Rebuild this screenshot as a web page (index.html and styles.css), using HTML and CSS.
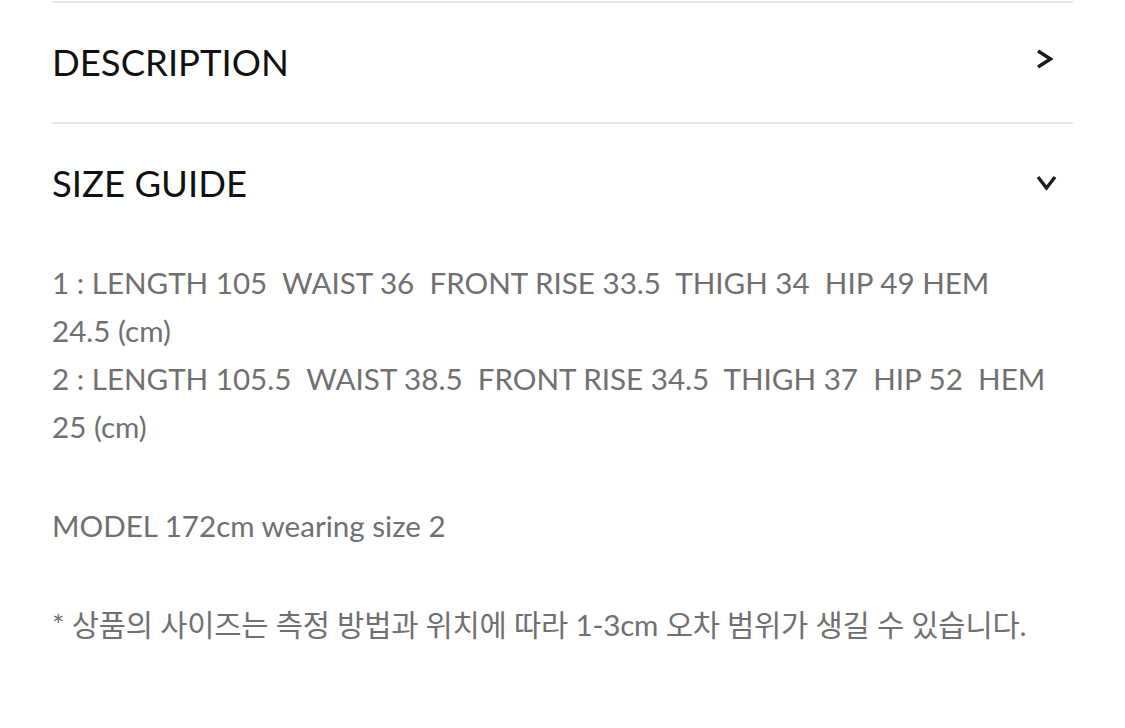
FILE: index.html
```html
<!DOCTYPE html>
<html lang="ko">
<head>
<meta charset="utf-8">
<link rel="stylesheet" href="styles.css">
</head>
<body>
<div class="accordion">
  <section class="item">
    <div class="item-head">
      <h2 class="item-title">DESCRIPTION</h2>
      <svg class="chev chev-right" width="17" height="20" viewBox="0 0 17 20"><path d="M2 2 L14.5 10 L2 18" fill="none" stroke="#1d1d1d" stroke-width="3.4" stroke-linejoin="miter"/></svg>
    </div>
  </section>
  <section class="item open">
    <div class="item-head">
      <h2 class="item-title">SIZE GUIDE</h2>
      <svg class="chev chev-down" width="21" height="16" viewBox="0 0 21 16"><path d="M2 2 L10.5 13 L19 2" fill="none" stroke="#1d1d1d" stroke-width="3.4" stroke-linejoin="miter"/></svg>
    </div>
    <div class="item-body">
      <p class="para">1 : LENGTH 105&nbsp; WAIST 36&nbsp; FRONT RISE 33.5&nbsp; THIGH 34&nbsp; HIP 49 HEM 24.5&nbsp;(cm)<br>2 : LENGTH 105.5&nbsp; WAIST 38.5&nbsp; FRONT RISE 34.5&nbsp; THIGH 37&nbsp; HIP 52&nbsp; HEM 25&nbsp;(cm)</p>
      <p class="para">MODEL 172cm wearing size 2</p>
      <p class="para ko">* 상품의 사이즈는 측정 방법과 위치에 따라 1-3cm 오차 범위가 생길 수 있습니다.</p>
    </div>
  </section>
</div>
</body>
</html>
```
FILE: styles.css
```css
html, body {
  margin: 0;
  padding: 0;
  background: #ffffff;
}
body {
  padding-top: 1px;
  font-family: Lato, "Noto Sans CJK KR", sans-serif;
}
.accordion {
  margin-left: 52px;
  width: 1021px;
}
.item {
  border-top: 2px solid #e6e6e6;
}
.item-head {
  height: 119px;
  display: flex;
  align-items: center;
  justify-content: space-between;
}
.item-title {
  margin: 0;
  font-weight: 400;
  font-size: 36.5px;
  color: #111111;
  line-height: 1;
}
.chev {
  display: block;
}
.chev-right {
  margin-right: 20px;
  margin-top: -8px;
}
.chev-down {
  margin-right: 16px;
  margin-top: -2px;
}
.item-body {
  padding-top: 16px;
  padding-bottom: 40px;
}
.para {
  margin: 0;
  font-size: 29.6px;
  line-height: 48px;
  color: #707070;
}
.para + .para {
  margin-top: 51px;
}
.ko {
  letter-spacing: -0.2px;
}
```
